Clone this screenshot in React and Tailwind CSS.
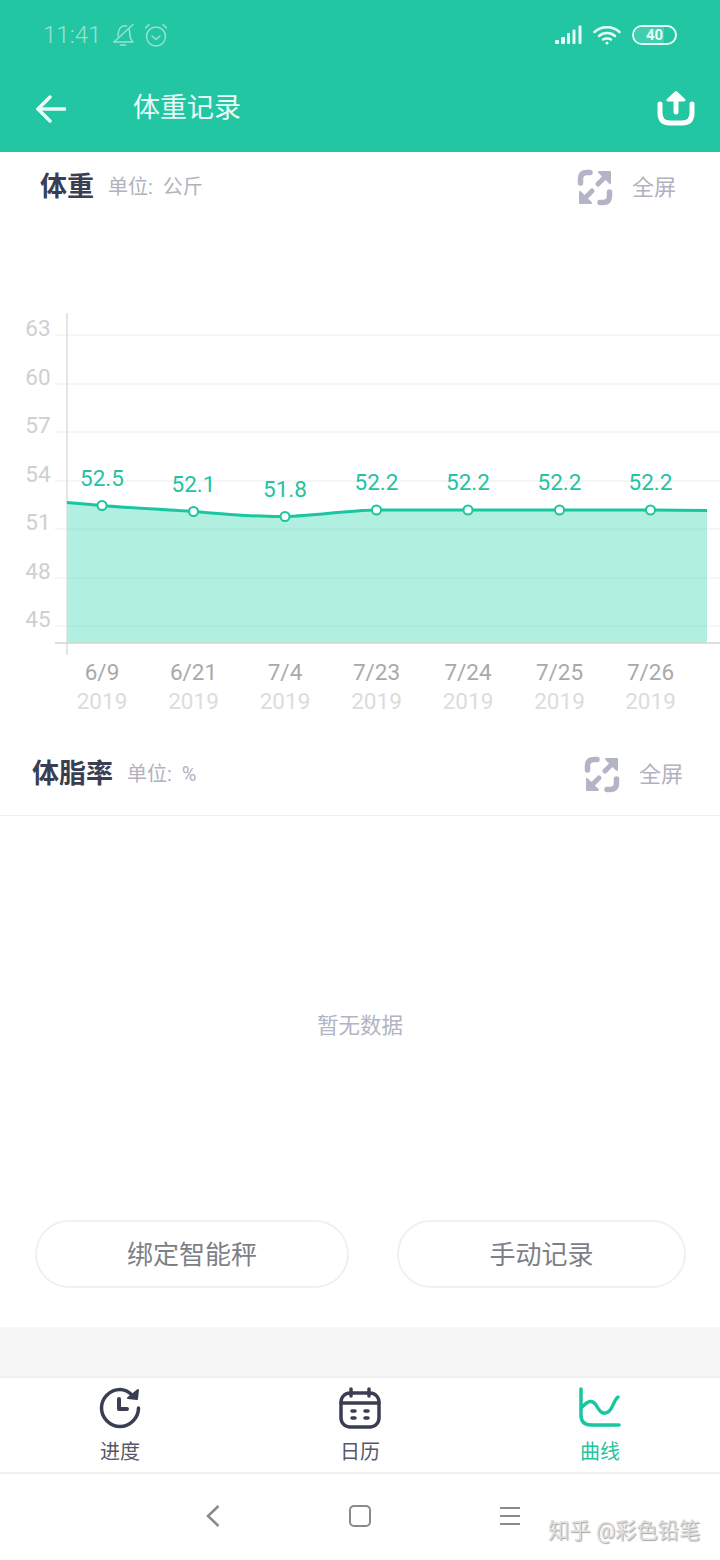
const points = [
  { x: 102, y: 505.5, value: '52.5', date: '6/9' },
  { x: 193.5, y: 511.5, value: '52.1', date: '6/21' },
  { x: 285, y: 516.5, value: '51.8', date: '7/4' },
  { x: 376.5, y: 510, value: '52.2', date: '7/23' },
  { x: 468, y: 510, value: '52.2', date: '7/24' },
  { x: 559.5, y: 510, value: '52.2', date: '7/25' },
  { x: 650.5, y: 510, value: '52.2', date: '7/26' },
];

const yTicks = [
  { y: 335, label: '63' },
  { y: 384, label: '60' },
  { y: 432, label: '57' },
  { y: 481, label: '54' },
  { y: 529, label: '51' },
  { y: 578, label: '48' },
  { y: 626, label: '45' },
];

const linePath =
  'M67 502.5 L102 505.5 C130 508 165 509.5 193.5 511.5 C225 514 255 517 285 516.5 C315 516 345 510.5 376.5 510 L650.5 510 L707 510.5';

function WeightChart() {
  return (
    <svg viewBox="0 222 720 511" className="block w-full h-[511px]">
      {yTicks.map((t) => (
        <g key={t.label}>
          <line x1="55" x2="720" y1={t.y} y2={t.y} stroke="#ececec" strokeWidth="1" />
          <text x="38" y={t.y + 1} textAnchor="middle" fontSize="22.5" fill="#cfcfcf">
            {t.label}
          </text>
        </g>
      ))}
      <path d={`${linePath} L707 643 L67 643 Z`} fill="#b1f0e1" />
      {yTicks.slice(4).map((t) => (
        <line key={t.label} x1="67" x2="707" y1={t.y} y2={t.y} stroke="#a6e4d5" strokeWidth="1" />
      ))}
      <line x1="67" x2="67" y1="313" y2="655" stroke="#dddddd" strokeWidth="1.5" />
      <line x1="55" x2="720" y1="643" y2="643" stroke="#cfd4d3" strokeWidth="1.5" />
      <path d={linePath} fill="none" stroke="#18c6a0" strokeWidth="3" />
      {points.map((p) => (
        <g key={p.date}>
          <circle cx={p.x} cy={p.y} r="4.5" fill="#fff" stroke="#18c6a0" strokeWidth="2" />
          <text x={p.x} y={p.y - 20} textAnchor="middle" fontSize="22.5" fill="#22c3a0">
            {p.value}
          </text>
          <text x={p.x} y="680" textAnchor="middle" fontSize="22.5" fill="#a9a9a9">
            {p.date}
          </text>
          <text x={p.x} y="709" textAnchor="middle" fontSize="22.5" fill="#dcdcdc">
            2019
          </text>
        </g>
      ))}
    </svg>
  );
}

function FullscreenIcon() {
  return (
    <svg viewBox="0 0 36 37" className="w-9 h-[37px]" fill="none" stroke="#b3b5c6" strokeWidth="5.5" strokeLinecap="round" strokeLinejoin="round">
      <path d="M3.500 14 V10 Q3.500 3.500 10 3.500 H13" />
      <path d="M32.500 23 V27 Q32.500 33.500 26 33.500 H23" />
      <path d="M28 8 L21 15" strokeWidth="5" />
      <path d="M8 29 L15 22" strokeWidth="5" />
      <path d="M22 3 H33 V14 Z" fill="#b3b5c6" stroke="#b3b5c6" strokeWidth="2" />
      <path d="M3 23 V34 H14 Z" fill="#b3b5c6" stroke="#b3b5c6" strokeWidth="2" />
    </svg>
  );
}

function SectionHeader({ title, unit, className, titleClass }) {
  return (
    <div className={`flex items-center justify-between ${className}`}>
      <div className="flex items-center">
        <span className={`font-bold text-[#3a3e52] ${titleClass}`}>{title}</span>
        <span className="ml-[14px] text-[20px] text-[#b0b2bc] [word-spacing:5px]">{unit}</span>
      </div>
      <div className="flex items-center gap-[19px]">
        <FullscreenIcon />
        <span className="text-[22px] text-[#b0b2c0]">全屏</span>
      </div>
    </div>
  );
}

function StatusBar() {
  return (
    <div className="h-[68px] flex items-center justify-between pl-[43px] pr-[43px] pt-[2px]">
      <div className="flex items-center gap-[9px] text-[#97e3d1]">
        <span className="text-[24px] font-light">11:41</span>
        <svg viewBox="0 0 24 24" className="w-6 h-6 ml-[1px]" fill="none" stroke="currentColor" strokeWidth="1.5" strokeLinecap="round" strokeLinejoin="round">
          <path d="M7 13 C7.500 11 7 9 8 7 C9.500 3.500 13 2.500 15.500 3" />
          <path d="M18 6 C19 8.500 18.500 12 19.500 15 C20 17 21 18 22 19 H3" />
          <path d="M9.500 22 H14.500" />
          <path d="M22 1.500 L3 19" />
        </svg>
        <svg viewBox="0 0 24 24" className="w-6 h-6" fill="none" stroke="currentColor" strokeWidth="1.5" strokeLinecap="round" strokeLinejoin="round">
          <circle cx="12" cy="13.500" r="9.500" />
          <path d="M8 13 L12 16.500 L16 13" />
          <path d="M1.500 5 L5 1.500 M22.500 5 L19 1.500" />
        </svg>
      </div>
      <div className="flex items-center gap-[10px]">
        <svg viewBox="0 0 28 20" className="w-7 h-5" fill="#e9fbf6">
          <rect x="0" y="15" width="4" height="4" rx="1" />
          <rect x="6" y="12" width="4" height="7" rx="1" />
          <rect x="12" y="8" width="3" height="11" rx="1" />
          <rect x="17.500" y="4.500" width="3" height="14.500" rx="1" />
          <rect x="23.500" y="0.500" width="3" height="18.500" rx="1" />
        </svg>
        <svg viewBox="0 0 28 20" className="w-7 h-5" fill="none" stroke="#e9fbf6" strokeWidth="2.500" strokeLinecap="round">
          <path d="M1.500 7 C8 0.500 20 0.500 26.500 7" />
          <path d="M6 11 C10 7 18 7 22 11" />
          <path d="M10 14.500 C12 13 16 13 18 14.500" />
          <circle cx="14" cy="18" r="1.500" fill="#e9fbf6" stroke="none" />
        </svg>
        <div className="ml-[1px] relative w-[45px] h-[20px] rounded-full border-2 border-[#e9fbf6] overflow-hidden flex items-center justify-center">
          <div className="absolute left-0 top-0 bottom-0 w-[30px] bg-[#3fcfae]" />
          <span className="relative text-[15px] leading-none font-bold text-[#e9fbf6]">40</span>
        </div>
      </div>
    </div>
  );
}

function NavBar() {
  return (
    <div className="h-[84px] flex items-center pl-[36px] pr-[25px] pb-[3px]">
      <svg viewBox="0 0 30 28" className="w-[30px] h-7" fill="none" stroke="#eafbf7" strokeWidth="3.500" strokeLinecap="round" strokeLinejoin="round">
        <path d="M29 14 H2" />
        <path d="M14 2 L2 14 L14 26" />
      </svg>
      <span className="ml-[67px] text-[27px] text-[#eafbf7]">体重记录</span>
      <svg viewBox="0 0 38 36" className="ml-auto w-[38px] h-9 -mt-[2px]" fill="none" stroke="#fff" strokeWidth="5" strokeLinecap="round" strokeLinejoin="round">
        <path d="M3 14 V23 Q3 33 13 33 H25 Q35 33 35 23 V14" />
        <path d="M19 22 V6" />
        <path d="M11 10 L19 2.500 L27 10 Z" fill="#fff" strokeWidth="3" />
      </svg>
    </div>
  );
}

function TabItem({ label, active, children }) {
  return (
    <div className="flex-1 flex flex-col items-center pt-[8px]">
      <div className="w-11 h-11 flex items-center justify-center">{children}</div>
      <span className={`mt-[7px] text-[20px] leading-[30px] ${active ? 'text-[#21c3a0]' : 'text-[#55586a]'}`}>{label}</span>
    </div>
  );
}

export default function App() {
  return (
    <div className="w-[720px] h-[1560px] bg-white overflow-hidden font-[Roboto,'Noto_Sans_CJK_SC',sans-serif]">
      <div className="bg-[#23c6a2]">
        <StatusBar />
        <NavBar />
      </div>

      <SectionHeader title="体重" unit="单位: 公斤" className="h-[70px] pl-[40px] pr-[44px]" titleClass="text-[27px]" />
      <WeightChart />

      <SectionHeader title="体脂率" unit="单位: %" className="h-[83px] pl-[32px] pr-[37px] border-b border-[#f0f0f0]" titleClass="text-[27px]" />

      <div className="h-[404px] pt-[16px] flex items-center justify-center">
        <span className="text-[21.5px] text-[#b2b4c4]">暂无数据</span>
      </div>

      <div className="flex pl-[35px] gap-[48px] text-[26px] leading-[38px] text-[#7d8087]">
        <button className="w-[314px] h-[68px] shrink-0 rounded-full border-2 border-[#f0f0f0] pt-[1px]">绑定智能秤</button>
        <button className="w-[289px] h-[68px] shrink-0 rounded-full border-2 border-[#f0f0f0] pt-[1px]">手动记录</button>
      </div>

      <div className="mt-[39px] h-[49px] bg-[#f7f7f8]" />

      <div className="h-[98px] flex border-t-2 border-b-2 border-[#f0f0f0]">
        <TabItem label="进度">
          <svg viewBox="0 0 42 42" className="w-[42px] h-[42px]" fill="none" stroke="#3a3e52" strokeWidth="3.500" strokeLinecap="round" strokeLinejoin="round">
            <path d="M33 8 C29.500 4.500 25.500 2.500 21 2.500 C11 2.500 2.500 11 2.500 21 C2.500 31 11 39.500 21 39.500 C31 39.500 39.500 31 39.500 21" />
            <path d="M39 3 L38 12 L29 11 Z" fill="#3a3e52" stroke="#3a3e52" strokeWidth="2" />
            <path d="M20 12 V22 H28" strokeWidth="4" />
          </svg>
        </TabItem>
        <TabItem label="日历">
          <svg viewBox="0 0 42 42" className="w-[42px] h-[42px]" fill="none" stroke="#3a3e52" strokeWidth="3.500" strokeLinecap="round" strokeLinejoin="round">
            <rect x="2" y="6" width="38" height="34" rx="9" />
            <path d="M2 16 H40" />
            <path d="M12 2 V9 M30 2 V9" />
            <path d="M13 24 H16 M26 24 H29 M13 31 H16 M26 31 H29" />
          </svg>
        </TabItem>
        <TabItem label="曲线" active>
          <svg viewBox="0 0 42 42" className="w-[42px] h-[42px]" fill="none" stroke="#18c6a0" strokeWidth="3.500" strokeLinecap="round" strokeLinejoin="round">
            <path d="M2 2 V28 Q2 38 12 38 H40" />
            <path d="M3 20 C9 14 13 12 17 18 C21 25 24 28 29 25 C34 22 34 14 39 10" />
          </svg>
        </TabItem>
      </div>

      <div className="relative h-[86px]">
        <svg viewBox="0 0 14 22" className="absolute left-[206px] top-[31px] w-[14px] h-[22px]" fill="none" stroke="#8a8a8a" strokeWidth="2.500">
          <path d="M12.500 1 L2 11 L12.500 21" />
        </svg>
        <div className="absolute left-[349px] top-[31px] w-[22px] h-[22px] rounded-[5px] border-[2.5px] border-[#8a8a8a]" />
        <div className="absolute left-[500px] top-[33px] w-[20px] flex flex-col gap-[6px]">
          <div className="h-[2px] bg-[#8a8a8a]" />
          <div className="h-[2px] bg-[#8a8a8a]" />
          <div className="h-[2px] bg-[#8a8a8a]" />
        </div>
        <span className="absolute left-[548px] top-[46px] text-[21.3px] leading-none whitespace-nowrap text-[#dddddd] [text-shadow:1px_1px_1px_#a5a5a5]">
          知乎 @彩色铅笔
        </span>
      </div>
    </div>
  );
}
